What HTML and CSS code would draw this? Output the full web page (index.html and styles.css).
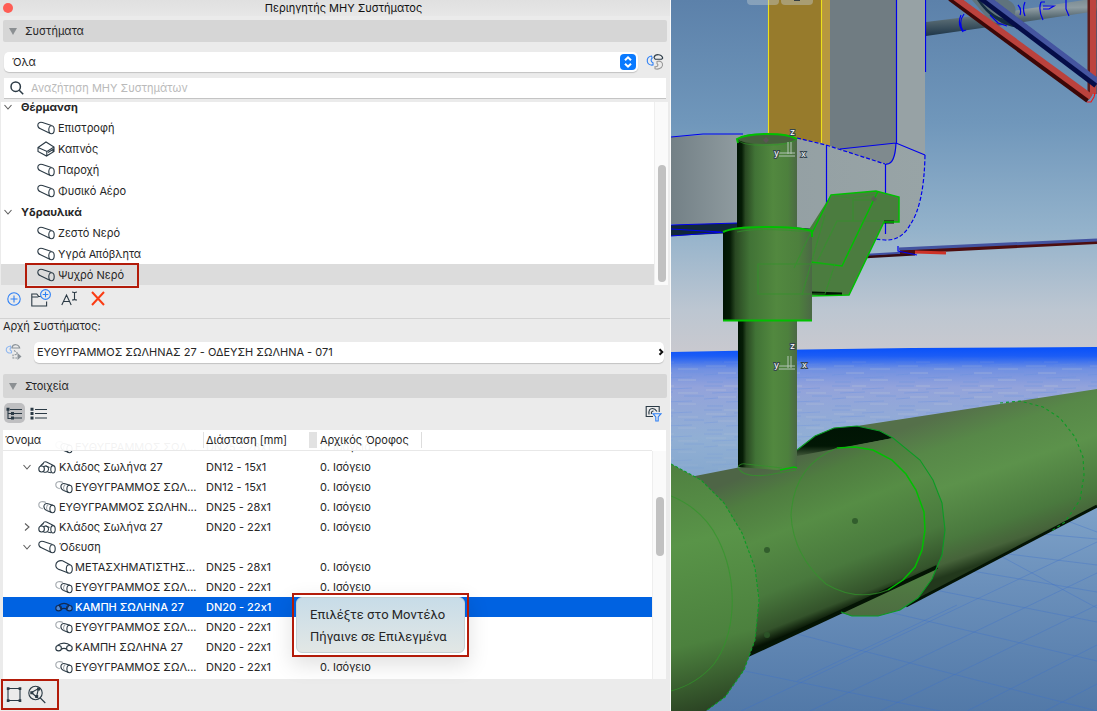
FILE: index.html
```html
<!DOCTYPE html>
<html lang="el">
<head>
	<meta charset="UTF-8">
	<title>Περιηγητής ΜΗΥ Συστήματος</title>
	<link rel="stylesheet" href="styles.css">
</head>
<body>

	<svg class="defs" aria-hidden="true">
		<symbol id="pipe" viewBox="0 0 18 14"><path d="M14.5 4.6L5.5 1.6C3 .8.8 1.800.8 4.200c0 2 1.200 3 2.700 3.600l9.300 4.400"/><ellipse cx="14.500" cy="8.700" rx="2.700" ry="4"/></symbol>
		<symbol id="duct" viewBox="0 0 18 16"><path d="M1 6.500L9 1l8 5v4.500L9.500 15 1 10.500zM1 6.500l9 4 7-4.500M9.800 10.500V15M11 11.500l5-3v2.500"/></symbol>
		<symbol id="straight" viewBox="0 0 18 14"><path class="pale" d="M8 2.500C5 .8.8 1.500.8 4.700c0 2.200 1.700 3.500 4 3.900"/><path d="M15 5.300L10 3.700C7.500 3 5.800 4.500 5.900 6.700c.1 2 1.300 3.100 2.800 3.700l5 2.200"/><path class="pale" d="M9.200 10.200c-1-2-.3-4.700 1.300-6"/><ellipse cx="14.500" cy="9" rx="2.600" ry="3.700"/></symbol>
		<symbol id="branch" viewBox="0 0 18 14"><path d="M15.500 5.500L8.500 2C6.500 1.300 5 2.300 5.200 4.400M2.500 6L5 3.500M9.500 12l3.500.800M7.500 5.800l4 1.700"/><ellipse cx="3.600" cy="9" rx="2.800" ry="3"/><path d="M5.500 7c2-2 5.500-.5 5 2.500-.4 2.700-3 3.200-5 2.500"/><ellipse cx="15" cy="9.300" rx="2.200" ry="3.700"/></symbol>
		<symbol id="reducer" viewBox="0 0 18 14"><path d="M15 4.800L7.500.8C4 0 .8 2 .8 5.300c0 2.400 1.500 3.700 3.500 4.300l9 3.500"/><ellipse cx="14.300" cy="9" rx="3" ry="4.200"/></symbol>
		<symbol id="elbow" viewBox="0 0 18 14"><path class="body" d="M2.500 5.500C6 2.300 12 2.300 15.500 5.500M6.300 9.500C7.500 8 10.500 8 11.700 9.500"/><ellipse cx="3.600" cy="8.200" rx="2.800" ry="2.700"/><ellipse cx="14.400" cy="8.200" rx="2.800" ry="2.700"/></symbol>
		<symbol id="elbow-on" viewBox="0 0 18 14"><ellipse class="end" cx="3.600" cy="8.200" rx="2.800" ry="2.700"/><ellipse class="end" cx="14.400" cy="8.200" rx="2.800" ry="2.700"/><path class="body" d="M4 5C7 3 11 3 14 5l-2.300 4.500C10.500 8 7.500 8 6.300 9.500z"/></symbol>
		<symbol id="down" viewBox="0 0 10 10"><path d="M1.500 3l3.500 4 3.500-4"/></symbol>
		<symbol id="right" viewBox="0 0 10 10"><path d="M3 1.500l4 3.500-4 3.500"/></symbol>
	</svg>

	<main class="panel">
		<header class="titlebar">
			<button class="close" aria-label="Κλείσιμο"></button>
			<h1>Περιηγητής ΜΗΥ Συστήματος</h1>
		</header>

		<h2 class="section"><i class="tri"></i>Συστήματα</h2>

		<div class="filter">
			<label class="select">
				<select aria-label="Σύστημα"><option>Όλα</option></select>
				<svg class="stepper" viewBox="0 0 16 16"><path d="M5 6.300l3-3 3 3M5 9.700l3 3 3-3"/></svg>
			</label>
			<button class="tool" aria-label="Χρώματα">
				<svg width="18" height="18" viewBox="0 0 18 18"><path class="b" d="M5.500 3C2.500 3.500 1 6 1.300 8.500c.4 2.500 2.700 4 5.700 3.500V9.800C4.800 9 4.500 6.500 6.200 5z"/><path d="M8 4.500C9 .8 15.500.5 16.700 5l-1 1.200H9.200z"/><path class="g" d="M11 8.500c3.500-1.300 6 1 5.500 4-.6 2.800-4.500 4.300-7.500 3.200v-2c2.500.300 4-1.500 2-3.200z"/></svg>
			</button>
		</div>

		<label class="search">
			<svg width="14" height="14" viewBox="0 0 14 14"><circle cx="5.700" cy="5.700" r="4.700"/><path d="M9.200 9.200l4 4"/></svg>
			<input type="text" placeholder="Αναζήτηση ΜΗΥ Συστημάτων" aria-label="Αναζήτηση">
		</label>

		<section class="tree-area">
			<ul class="tree">
				<li class="group"><svg class="chev"><use href="#down"/></svg>Θέρμανση</li>
				<li><svg class="ico"><use href="#pipe"/></svg>Επιστροφή</li>
				<li><svg class="ico"><use href="#duct"/></svg>Καπνός</li>
				<li><svg class="ico"><use href="#pipe"/></svg>Παροχή</li>
				<li><svg class="ico"><use href="#pipe"/></svg>Φυσικό Αέρο</li>
				<li class="group"><svg class="chev"><use href="#down"/></svg>Υδραυλικά</li>
				<li><svg class="ico"><use href="#pipe"/></svg>Ζεστό Νερό</li>
				<li><svg class="ico"><use href="#pipe"/></svg>Υγρά Απόβλητα</li>
				<li class="current"><svg class="ico"><use href="#pipe"/></svg>Ψυχρό Νερό</li>
			</ul>
			<div class="track"><i class="thumb tree-thumb"></i></div>
			<div class="mark mark-tree"></div>
		</section>

		<div class="actions">
			<button class="tool" aria-label="Νέο"><svg width="14" height="14" viewBox="0 0 14 14"><circle class="b" cx="7" cy="7" r="6.200"/><path class="b" d="M7 3.500v7M3.500 7h7"/></svg></button>
			<button class="tool" aria-label="Νέος φάκελος"><svg width="20" height="19" viewBox="0 0 20 19"><path d="M15.600 12.500v4.500H.8V5h5l2 2.500h2M.8 8h6.500"/><circle class="b" cx="14.500" cy="5.500" r="4.900"/><path class="b" d="M14.500 2.700v5.600M11.700 5.500h5.600"/></svg></button>
			<button class="tool" aria-label="Μετονομασία"><svg width="17" height="15" viewBox="0 0 17 15"><path d="M.8 14L5.500 4 10.200 14M2.500 10.500h6M11 1c1.300 0 2.500.2 2.500 1 0-.8 1.200-1 2.500-1M13.500 2v6M11 9c1.300 0 2.500-.2 2.500-1 0 .8 1.200 1 2.500 1"/></svg></button>
			<button class="tool" aria-label="Διαγραφή"><svg width="14" height="15" viewBox="0 0 14 15"><path class="r" d="M1 1l12 13M13 1L1 14"/></svg></button>
		</div>

		<div class="origin">
			<label for="origin">Αρχή Συστήματος:</label>
			<div class="origin-row">
				<svg class="faded" width="18" height="18" viewBox="0 0 18 18"><path class="b" d="M5.500 3C2.500 3.500 1 5.500 1.300 7.500c.4 2 2.700 3 5.200 2.300V8C4.800 7.500 4.500 6 6 4.500z"/><path d="M7 4.500C8 .8 13.500.5 14.700 5H7z"/><path d="M9 7.500l3 2v2l-4 .500v3h4" stroke-dasharray="2 1"/><path class="solid" d="M12.500 10l4 3.500-4 3.500z"/></svg>
				<button id="origin" class="combo"><span>ΕΥΘΥΓΡΑΜΜΟΣ ΣΩΛΗΝΑΣ 27 - ΟΔΕΥΣΗ ΣΩΛΗΝΑ - 071</span><svg width="6" height="8" viewBox="0 0 6 8"><path d="M1.500 1.200L4.300 4 1.500 6.800"/></svg></button>
			</div>
		</div>

		<h2 class="section section-low"><i class="tri"></i>Στοιχεία</h2>

		<div class="views">
			<button class="tool on" aria-label="Δέντρο"><svg width="17" height="13" viewBox="0 0 17 13"><path d="M2 2v9.500h4M2 6.500h4M4 2.500h12M8 6.500h8M8 11h8"/><path class="solid" d="M.5.800h3v3h-3zM5 5h3v3H5zM5 9.500h3v3H5z"/></svg></button>
			<button class="tool" aria-label="Λίστα"><svg width="17" height="13" viewBox="0 0 17 13"><path d="M5 2.500h12M5 6.500h12M5 11h12"/><path class="solid" d="M.5.800h3v3h-3zM.5 5h3v3h-3zM.5 9.500h3v3h-3z"/></svg></button>
			<button class="tool last" aria-label="Φίλτρο"><svg width="17" height="17" viewBox="0 0 17 17"><path d="M8 11.500H1.200V1.500h13V7M4 9.500C3.500 5 5 3.500 7.500 3.500S11 5 12 6.500M6.500 9C6 7 7 6 8.500 6"/><path class="b" d="M8 8.700h8l-2.800 3.200V16h-2.400v-4.100z"/></svg></button>
		</div>

		<section class="elements">
			<div class="scroller">
				<table>
					<thead>
						<tr><th>Όνομα</th><th>Διάσταση [mm]</th><th>Αρχικός Όροφος</th></tr>
					</thead>
					<tbody>
						<tr><td class="l2"><svg class="ico"><use href="#straight"/></svg>ΕΥΘΥΓΡΑΜΜΟΣ ΣΩΛ...</td><td>DN25 - 28x1</td><td>0. Ισόγειο</td></tr>
						<tr><td class="l1"><svg class="chev"><use href="#down"/></svg><svg class="ico"><use href="#branch"/></svg>Κλάδος Σωλήνα 27</td><td>DN12 - 15x1</td><td>0. Ισόγειο</td></tr>
						<tr><td class="l2"><svg class="ico"><use href="#straight"/></svg>ΕΥΘΥΓΡΑΜΜΟΣ ΣΩΛ...</td><td>DN12 - 15x1</td><td>0. Ισόγειο</td></tr>
						<tr><td class="l1 leaf"><svg class="ico"><use href="#straight"/></svg>ΕΥΘΥΓΡΑΜΜΟΣ ΣΩΛΗΝ...</td><td>DN25 - 28x1</td><td>0. Ισόγειο</td></tr>
						<tr><td class="l1"><svg class="chev"><use href="#right"/></svg><svg class="ico"><use href="#branch"/></svg>Κλάδος Σωλήνα 27</td><td>DN20 - 22x1</td><td>0. Ισόγειο</td></tr>
						<tr><td class="l1"><svg class="chev"><use href="#down"/></svg><svg class="ico"><use href="#pipe"/></svg>Όδευση</td><td></td><td></td></tr>
						<tr><td class="l2"><svg class="ico"><use href="#reducer"/></svg>ΜΕΤΑΣΧΗΜΑΤΙΣΤΗΣ...</td><td>DN25 - 28x1</td><td>0. Ισόγειο</td></tr>
						<tr><td class="l2"><svg class="ico"><use href="#straight"/></svg>ΕΥΘΥΓΡΑΜΜΟΣ ΣΩΛ...</td><td>DN20 - 22x1</td><td>0. Ισόγειο</td></tr>
						<tr class="selected"><td class="l2"><svg class="ico"><use href="#elbow-on"/></svg>ΚΑΜΠΗ ΣΩΛΗΝΑ 27</td><td>DN20 - 22x1</td><td></td></tr>
						<tr><td class="l2"><svg class="ico"><use href="#straight"/></svg>ΕΥΘΥΓΡΑΜΜΟΣ ΣΩΛ...</td><td>DN20 - 22x1</td><td></td></tr>
						<tr><td class="l2"><svg class="ico"><use href="#elbow"/></svg>ΚΑΜΠΗ ΣΩΛΗΝΑ 27</td><td>DN20 - 22x1</td><td>0. Ισόγειο</td></tr>
						<tr><td class="l2"><svg class="ico"><use href="#straight"/></svg>ΕΥΘΥΓΡΑΜΜΟΣ ΣΩΛ...</td><td>DN20 - 22x1</td><td>0. Ισόγειο</td></tr>
					</tbody>
				</table>
			</div>
			<div class="track"><i class="thumb list-thumb"></i></div>
			<div class="mark mark-menu">
				<div class="menu">
					<button>Επιλέξτε στο Μοντέλο</button>
					<button>Πήγαινε σε Επιλεγμένα</button>
				</div>
			</div>
		</section>

		<footer class="bottom">
			<div class="mark bottom-tools">
				<button class="tool" aria-label="Επιλογή"><svg width="16" height="17" viewBox="0 0 16 17"><path d="M2 2.500h12v12H2z"/><path class="solid" d="M.8 1.200h2.700v2.700H.8zM12.600 1.200h2.700v2.700h-2.700zM.8 13.200h2.700v2.700H.8zM12.600 13.200h2.700v2.700h-2.700z"/></svg></button>
				<button class="tool" aria-label="Εστίαση"><svg width="18" height="19" viewBox="0 0 18 19"><circle cx="7.500" cy="8" r="6.700"/><path d="M12.300 13l5 5M3.500 7.500l7-4-2 8.500z"/><path class="solid" d="M2.300 6.300h3v3h-3zM9 2.500h3v3H9zM7.200 10h3v3h-3z"/></svg></button>
			</div>
		</footer>
	</main><!-- .panel -->

	<aside class="view">
		<svg viewBox="671 0 426 711" preserveAspectRatio="xMidYMid slice" role="img" aria-label="Τρισδιάστατη προβολή">
			<defs>
				<linearGradient id="sky" x1="0" y1="0" x2="0" y2="1">
					<stop offset="0" stop-color="#5c81aa"/><stop offset=".35" stop-color="#7097bb"/><stop offset=".65" stop-color="#93b2cb"/><stop offset=".88" stop-color="#bcc6d1"/><stop offset="1" stop-color="#c9c9cf"/>
				</linearGradient>
				<linearGradient id="sea" x1="0" y1="0" x2="0" y2="1">
					<stop offset="0" stop-color="#0750fb"/><stop offset=".025" stop-color="#1c5df5"/><stop offset=".06" stop-color="#7090e2"/><stop offset=".11" stop-color="#93a3db"/><stop offset=".25" stop-color="#91afd4"/><stop offset=".4" stop-color="#81a5cb"/><stop offset=".65" stop-color="#6b90bb"/><stop offset="1" stop-color="#5279a8"/>
				</linearGradient>
				<linearGradient id="tube">
					<stop offset="0" stop-color="#001403"/><stop offset=".08" stop-color="#061c06"/><stop offset=".14" stop-color="#294822"/><stop offset=".3" stop-color="#417336"/><stop offset=".6" stop-color="#52883f"/><stop offset=".85" stop-color="#4d803d"/><stop offset="1" stop-color="#4b6845"/>
				</linearGradient>
				<linearGradient id="far" gradientUnits="userSpaceOnUse" x1="965" y1="407" x2="1015" y2="552">
					<stop offset="0" stop-color="#55704a"/><stop offset=".2" stop-color="#578848"/><stop offset=".45" stop-color="#5c924b"/><stop offset=".78" stop-color="#4a793e"/><stop offset=".92" stop-color="#46633a"/><stop offset="1" stop-color="#22381c"/>
				</linearGradient>
				<linearGradient id="mid" gradientUnits="userSpaceOnUse" x1="795" y1="456" x2="855" y2="608">
					<stop offset="0" stop-color="#4e6546"/><stop offset=".16" stop-color="#4f7d40"/><stop offset=".4" stop-color="#568d45"/><stop offset=".72" stop-color="#49793d"/><stop offset=".93" stop-color="#34532b"/><stop offset="1" stop-color="#061304"/>
				</linearGradient>
				<linearGradient id="near" gradientUnits="userSpaceOnUse" x1="671" y1="470" x2="730" y2="711">
					<stop offset="0" stop-color="#508141"/><stop offset=".3" stop-color="#599448"/><stop offset=".7" stop-color="#4c813e"/><stop offset="1" stop-color="#283e21"/>
				</linearGradient>
				<linearGradient id="lip" x1="0" y1="0" x2="0" y2="1"><stop offset="0" stop-color="#518343"/><stop offset="1" stop-color="#4d6c41"/></linearGradient>
				<linearGradient id="duct-side"><stop offset="0" stop-color="#738086"/><stop offset=".3" stop-color="#939fa3"/><stop offset="1" stop-color="#98a4a6"/></linearGradient>
				<linearGradient id="steel" x1="0" y1="0" x2=".12" y2="1"><stop offset="0" stop-color="#6d8089"/><stop offset=".35" stop-color="#8e9ca2"/><stop offset=".6" stop-color="#53666f"/><stop offset="1" stop-color="#1c3448"/></linearGradient>
				<linearGradient id="hole" x1="0" y1="0" x2="0" y2="1"><stop offset="0" stop-color="#001404"/><stop offset=".65" stop-color="#021705"/><stop offset="1" stop-color="#475f3f"/></linearGradient>
				<pattern id="ripples" width="64" height="24" patternUnits="userSpaceOnUse">
					<path d="M0 2h18M30 5l22-1M8 9l25-1M44 12h20M0 15l14-1M22 18l30-1M3 22h16" stroke="#6c91df" stroke-opacity=".5"/>
					<path d="M20 2h14M2 6h20M38 9h20M14 13h18M38 20h18" stroke="#c3cdda" stroke-opacity=".45"/>
				</pattern>
				<linearGradient id="fade" x1="0" y1="0" x2="0" y2="1"><stop offset="0" stop-color="#000"/><stop offset=".15" stop-color="#fff"/><stop offset=".55" stop-color="#999"/><stop offset="1" stop-color="#000"/></linearGradient>
				<mask id="fading"><rect x="671" y="355" width="426" height="140" fill="url(#fade)"/></mask>
			</defs>

			<rect x="671" width="426" height="352" fill="url(#sky)"/>
			<path d="M671 352l100-2 140-2 186-1v364H671z" fill="url(#sea)"/>
			<rect x="671" y="355" width="426" height="140" fill="url(#ripples)" mask="url(#fading)"/>
			<g class="grid">
				<path d="M740 670l200 41M797 634l300 77M893 613l204 48M930 589l167 33M960 569l137 23M1000 553l97 12M1042 534l55 5M741 711l356-169M810 711l287-138M880 711l217-106M967 711l130-66M1045 711l52-27M797 681l160-76M930 518l167 90M1054 516l43 16"/>
			</g>

			<!-- pipes in the upper right -->
			<path d="M926 22l80-10 91-14v13l-80 12-91 13z" fill="url(#steel)"/>
			<path d="M972 0h36q12 6 5 18-10 10-24 2z" fill="#5f737d"/>
			<path d="M980 0q15 21 34 20l6 8q-25-2-43-28z" fill="#142d42"/>
			<g class="edge"><path d="M964 14q-6 8-1 17l3-1M961 15q-4 9 2 17M1018 5q4 4 2 10M1025 2q-3 7 0 14M1041 2q-3 8 2 18M1041 2h4M1043 6h11l-5 3h-6M1066 0v9l3 7M990 15l8 8 9 3M925.500 0v72" /></g>
			<path d="M1092 0v94" stroke="#5d1c1a" stroke-width="9"/><path d="M1093 0v94" stroke="#bd443f" stroke-width="6"/>
			<path d="M951-3l138 102" stroke="#3d0707" stroke-width="9"/><path d="M953-4l138 101" stroke="#bb423d" stroke-width="6"/>
			<path d="M982-3l115 87" stroke="#050d48" stroke-width="9"/><path d="M985-4l114 86" stroke="#4555a0" stroke-width="5"/>
			<path d="M1087 102h4l3-5 1-4" class="red"/>

			<!-- ventilation duct -->
			<path d="M671 137q65-5 125 0l100 6 29 12q-2 50-15 70-9 16-25 15l-88-12-126-4z" fill="url(#duct-side)"/>
			<path d="M671 225l67-2 90 7v4l-55-3-102 5z" fill="#12283a"/>
			<path d="M830 0h66v143q-1 22-10 21l-56-18z" fill="#707c82"/>
			<path d="M840 149l56-6q-2 20-10 21z" fill="#7f8a8e"/>
			<path d="M896 0h29v155l-29-12z" fill="#97a2a5"/>
			<path d="M768 0h54v143l-54-9z" fill="#977b2c"/><path d="M822 0h8v146l-8-3z" fill="#b7983e"/>
			<path d="M768.500 0v134M821.500 0v143" stroke="#eee11b"/>
			<g class="edge"><path d="M671 137l32-3h40M896.500 0v143M840 149l56-6 29 12M896 143q-1 22-10 21M885.500 164v70M826.500 145v60M671 225l67-2M671 229l50 3M671 236l55-4"/><path d="M797 138l29 7 59 19M925 155q-1 50-15 70-9 16-25 15l-10-1" stroke-dasharray="4 2"/></g>

			<!-- thin lines behind the branch -->
			<path d="M862 257l53-3" stroke="#360b12" stroke-width="3"/><path d="M862 255l53-3" stroke="#3f4fa2" stroke-width="2"/>
			<path d="M900 252l197-10" stroke="#4d0d0e" stroke-width="4"/><path d="M899 249l198-9" stroke="#4353a0" stroke-width="3"/><path d="M915 252l31 1" stroke="#cd3328" stroke-width="3"/>
			<path d="M898 246v5l19 4" class="edge"/>

			<!-- horizontal main pipe -->
			<path d="M797 450l18-14 19-8 23-2 240-37v117l-191 100-30 10-25-1-12-4z" fill="url(#far)"/>
			<path d="M906 606l191-100" stroke="#041404" stroke-width="3"/>
			<path d="M838 612l99-47-5 14-14 19-18 12-22 6h-26z" fill="url(#lip)"/>
			<path d="M797 450l18-14 19-8 23-2 23 5 13 7-96 19z" fill="url(#hole)"/>
			<path d="M690 477l107-21 96-18 27 22 13 20 9 23 3 27-3 25-5 12-186 88-70 30z" fill="url(#mid)"/>
			<path d="M748 655l189-88" stroke="#041404" stroke-width="4"/>
			<g class="rim"><path d="M797 450l18-14 19-8 23-2 23 5 13 7 27 22 13 20 9 23 3 27-3 25-10 24-14 19-18 12-22 6h-26l-11-4"/><path d="M1000 403l20-2 23 6 17 11 15 19 8 20 1 18-4 25-15 22-15 10" stroke-dasharray="3 3"/></g>
			<path class="faint" d="M837 448q-43 17-46 67 2 40 35 69 30 18 62 6"/>
			<path class="bright thin" d="M837 448l18-1 18 3 19 10 14 14 10 16 8 22 1 18-3 20-7 17-12 13-15 10"/>
			<path d="M671 464l30 16 23 23 18 30 13 35 4 32-4 40-11 30-19 27-19 14h-35z" fill="url(#near)"/>
			<path class="faint" d="M671 496q32 13 47 43 16 32 14 70-2 33-18 55-17 20-43 27"/>
			<path class="rim" d="M671 464l30 16 23 23 18 30 13 35 4 32-4 40-11 30-19 27-19 14" stroke-dasharray="3 2"/>

			<!-- vertical pipe with collar and branch -->
			<path d="M738 320h59v147l-20 3-39-3z" fill="url(#tube)"/>
			<path class="faint" d="M738 467q2-4 8-3l36 4M738 467q4 11 30 8l28-5"/><path class="bright thin" d="M780 470l14-3 3 1"/>
			<path d="M737 139q8-6 31-5 22 0 29 5v90h-60z" fill="url(#tube)"/>
			<ellipse cx="767" cy="139" rx="29" ry="5" fill="#46613d"/>
			<path class="bright" d="M738 143l-1-4q9-5 31-5 21 0 29 5"/>
			<path class="faint" d="M738 140q5 6 29 5 22 0 30-6"/>
			<path d="M831 195l45-4 23 6v25h-15l-35 73h-50l9-64z" fill="#4b7c3f"/>
			<path d="M812 293l30 1" stroke="#021604" stroke-width="3"/><path d="M884 222h10" stroke="#021604" stroke-width="3"/>
			<path class="bright thin" d="M812 233l19-38 45-4 23 6v25h-15l-35 73-40 1M878 191l-36 75-31-4"/>
			<path class="faint" d="M831 195l19 3 27-4M853 198v23h-16l-20 41M837 221h47M853 200h22"/>
			<path d="M723 231q10-5 44-5 31 0 45 5v90h-89z" fill="url(#tube)"/>
			<path class="faint" d="M758 264h77l-10 30h-67zM812 230l-18 38M737 232q20-5 75 0M802 295l23-80"/>
			<path class="bright" d="M723 232q10-5 44-5 31 0 45 4v6M723 320.500h89"/>

			<g class="dot"><circle cx="855" cy="521" r="3"/><circle cx="767" cy="550" r="3"/><circle cx="767" cy="635" r="3"/></g>
			<path d="M766 137l3 3-3 3-3-3zM874 196l3 3-3 3-3-3z" fill="#654d5f" opacity=".7"/>
			<g class="axis">
				<path d="M788 142v12M791 142v12M779 153h16M779 156h16M788 356v12M791 356v12M779 366h16M779 369h16"/>
				<text x="790" y="135">z</text><text x="774" y="156">y</text><text x="801" y="157">x</text>
				<text x="790" y="349">z</text><text x="774" y="368">y</text><text x="802" y="368">x</text>
			</g>
			<g fill="#c2ccd2" opacity=".42"><rect x="747" y="-8" width="32" height="13" rx="4"/><rect x="781" y="-8" width="32" height="13" rx="4"/></g>
			<path d="M794 0h6" stroke="#333c42" stroke-width="2"/>
		</svg>
	</aside><!-- .view -->

</body>
</html>
```
FILE: styles.css
```css
*{ box-sizing: border-box;}
body{ display: grid; grid-template-columns: minmax(0, 671fr) minmax(0, 426fr); margin: 0; height: 100vh; font: 11px/20px Inter, "Noto Sans", sans-serif; font-feature-settings: "calt" 0; color: #262626; background: #ebebeb; overflow: hidden;}
h1, h2, ul{ margin: 0; padding: 0; font-size: 11px; font-weight: normal;}
button, input, select{ margin: 0; padding: 0; font: inherit; color: inherit; border: 0; background: none;}
.defs{ position: absolute; width: 0; height: 0;}
svg{ flex: none; fill: none; stroke: #2b3a45; stroke-width: 1.1;}
svg .b{ stroke: #2f80f5;}
svg .g{ stroke: #999;}
svg .r{ stroke: #fa3c14; stroke-width: 2;}
svg .solid{ fill: #2b3a45; stroke: none;}
.pale{ stroke: #a5abb0;}

.panel{ display: flex; flex-direction: column; min-width: 0; height: 100vh; border-right: 1px solid #fafafa;}
.titlebar{ display: flex; align-items: center; height: 16px; padding: 0 0 0 3px; background: linear-gradient(#e0e0e0, #e7e7e7);}
.titlebar h1{ flex: 1; padding-left: 4px; line-height: 16px; text-align: center; color: #111;}
.close{ width: 10px; height: 10px; border-radius: 50%; background: #fe5d55;}
.section{ display: flex; align-items: center; height: 22px; margin: 4px 3px 0; padding-left: 6px; border-radius: 2px; background: #d6d6d6;}
.section-low{ height: 24px; margin-top: 11px;}
.tri{ margin-right: 8px; border: 4px solid transparent; border-top: 7px solid #8b8f92; border-bottom: 0;}

.tool{ display: flex; align-items: center; justify-content: center;}
.filter{ display: flex; gap: 8px; align-items: center; margin: 10px 6px 0 4px;}
.select{ position: relative; flex: 1; display: flex; height: 20px; border-radius: 5px; background: #fff; box-shadow: 0 1px 1px #c2c2c2;}
.select select{ flex: 1; padding-left: 8px; appearance: none; outline: 0;}
.stepper{ position: absolute; right: 2px; top: 2px; width: 16px; height: 16px; border-radius: 4px; background: #0a7aff; stroke: #fff; stroke-width: 2; pointer-events: none;}
.search{ display: flex; align-items: center; gap: 7px; height: 21px; margin: 6px 4px 0; padding-left: 6px; background: #fff; border-bottom: 1px solid #c4c4c4;}
.search svg{ stroke-width: 1.5;}
.search input{ flex: 1; outline: 0;}
.search input::placeholder{ color: #bababa;}

.tree-area{ position: relative; flex: 183 1 0; display: flex; min-height: 0; margin: 3px 2px 0 1px;}
.tree{ flex: 1; display: flex; flex-direction: column; justify-content: flex-end; overflow: hidden; list-style: none; background: #fff;}
.tree li{ display: flex; flex: none; align-items: center; gap: 3px; height: 21px; padding-left: 36px;}
.tree .group{ gap: 8px; padding-left: 2px; font-weight: bold;}
.tree .current{ background: #dcdcdc;}
.chev{ width: 10px; height: 10px; stroke: #5d5d5d;}
.ico{ width: 18px; height: 16px;}
.track{ flex: none; width: 14px; border-left: 1px solid #eee; background: #fafafa;}
.thumb{ display: block; width: 8px; margin-left: 3px; border-radius: 4px; background: #c1c1c1;}
.tree-thumb{ height: 117px; margin-top: 63px;}
.mark{ border: 2px solid #b31b09;}
.mark-tree{ position: absolute; left: 24px; bottom: -3px; width: 114px; height: 25px;}

.actions{ display: flex; align-items: center; gap: 10px; height: 34px; padding: 0 0 6px 7px; border-bottom: 1px solid #d2d2d2;}
.actions .tool:last-child{ margin-left: 3px;}
.origin{ padding: 0 6px 0 3px; line-height: 14px;}
.origin label{ display: block;}
.origin-row{ display: flex; align-items: center; gap: 11px; height: 22px; margin-top: 8px; padding-left: 2px;}
.faded{ opacity: .5;}
.combo{ flex: 1; display: flex; align-items: center; justify-content: space-between; height: 21px; padding-left: 3px; border-radius: 5px; background: #fff; box-shadow: 0 1px 1px #c2c2c2;}
.combo svg{ stroke: #111; stroke-width: 2;}

.views{ display: flex; align-items: center; gap: 5px; height: 32px; padding: 0 8px 2px 4px;}
.views .tool{ height: 20px;}
.views .on{ width: 21px; border-radius: 5px; background: #bfbfc1;}
.views .last{ margin-left: auto;}
.elements{ position: relative; flex: 249 1 0; display: flex; min-height: 0; margin: 0 4px 0 3px; background: #fff;}
.scroller{ flex: 1; display: flex; align-items: flex-end; overflow: hidden; padding-bottom: 2px;}
table, tbody{ display: block; width: 100%;}
thead{ position: relative; z-index: 1; display: block; height: 21px; margin-bottom: -14px; background: rgba(255, 255, 255, .94); border-bottom: 1px solid #e8e8e8;}
tr{ display: grid; grid-template-columns: 203px 114px 1fr; height: 20px;}
th{ padding: 0; font-weight: normal; text-align: left;}
th:first-child{ padding-left: 2px;}
th:nth-child(2){ border-right: 8px solid #e2e2e2; border-left: 1px solid #e2e2e2; margin: 2px 3px 2px -3px; padding-left: 2px; line-height: 16px;}
th:nth-child(3){ width: 102px; margin: 2px 0; border-right: 1px solid #ddd; line-height: 16px;}
td{ padding: 0; white-space: nowrap;}
td:first-child{ display: flex; align-items: center; gap: 2px;}
.l1{ padding-left: 19px;}
.l1 .ico{ margin: 0 1px 0 4px;}
.l1.leaf{ padding-left: 31px;}
.l2{ padding-left: 52px;}
.selected{ color: #fff; font-weight: 500; background: #0062e1;}
.selected .ico{ stroke: #122a50;}
.body, .end{ fill: none;}
.selected .body{ fill: #fff;}
.end{ fill: #4b86d6;}
.elements .track{ margin-top: 21px;}
.list-thumb{ height: 59px; margin-top: 46px;}
.mark-menu{ position: absolute; z-index: 2; left: 289px; bottom: 22px; width: 177px; padding: 2px; box-shadow: 0 8px 20px rgba(0, 0, 0, .12);}
.menu{ display: flex; flex-direction: column; padding: 6px 13px 4px; border: 1px solid #c5d0d3; border-radius: 6px; font: 13px/22px Roboto, Inter, sans-serif; background: linear-gradient(#c7dce8, #e2e7e5);}
.menu button{ text-align: left; white-space: nowrap;}

.bottom{ display: flex; height: 32px; padding: 0 0 1px 1px;}
.bottom-tools{ display: flex; align-items: center; gap: 6px; width: 58px; padding-left: 3px;}

.view{ min-width: 0; height: 100vh; background: #6b90bb;}
.view > svg{ display: block; width: 100%; height: 100%; stroke: none;}
.grid{ stroke: #3b70cc; stroke-opacity: .35; stroke-width: 1;}
.edge{ stroke: #0000ed; stroke-width: 1.2;}
.red{ stroke: #f21616;}
.rim{ stroke: #0b9b24;}
.bright{ stroke: #00c000; stroke-width: 2;}
.thin{ stroke-width: 1.5;}
.faint{ stroke: #319629; stroke-opacity: .7;}
.dot{ fill: #2d5729; fill-opacity: .85;}
.axis{ stroke: #b3c5b6; stroke-width: 1;}
.axis text{ font: 9px Inter, sans-serif; fill: #fff; stroke: #34444e; stroke-width: 2px; paint-order: stroke;}
```
